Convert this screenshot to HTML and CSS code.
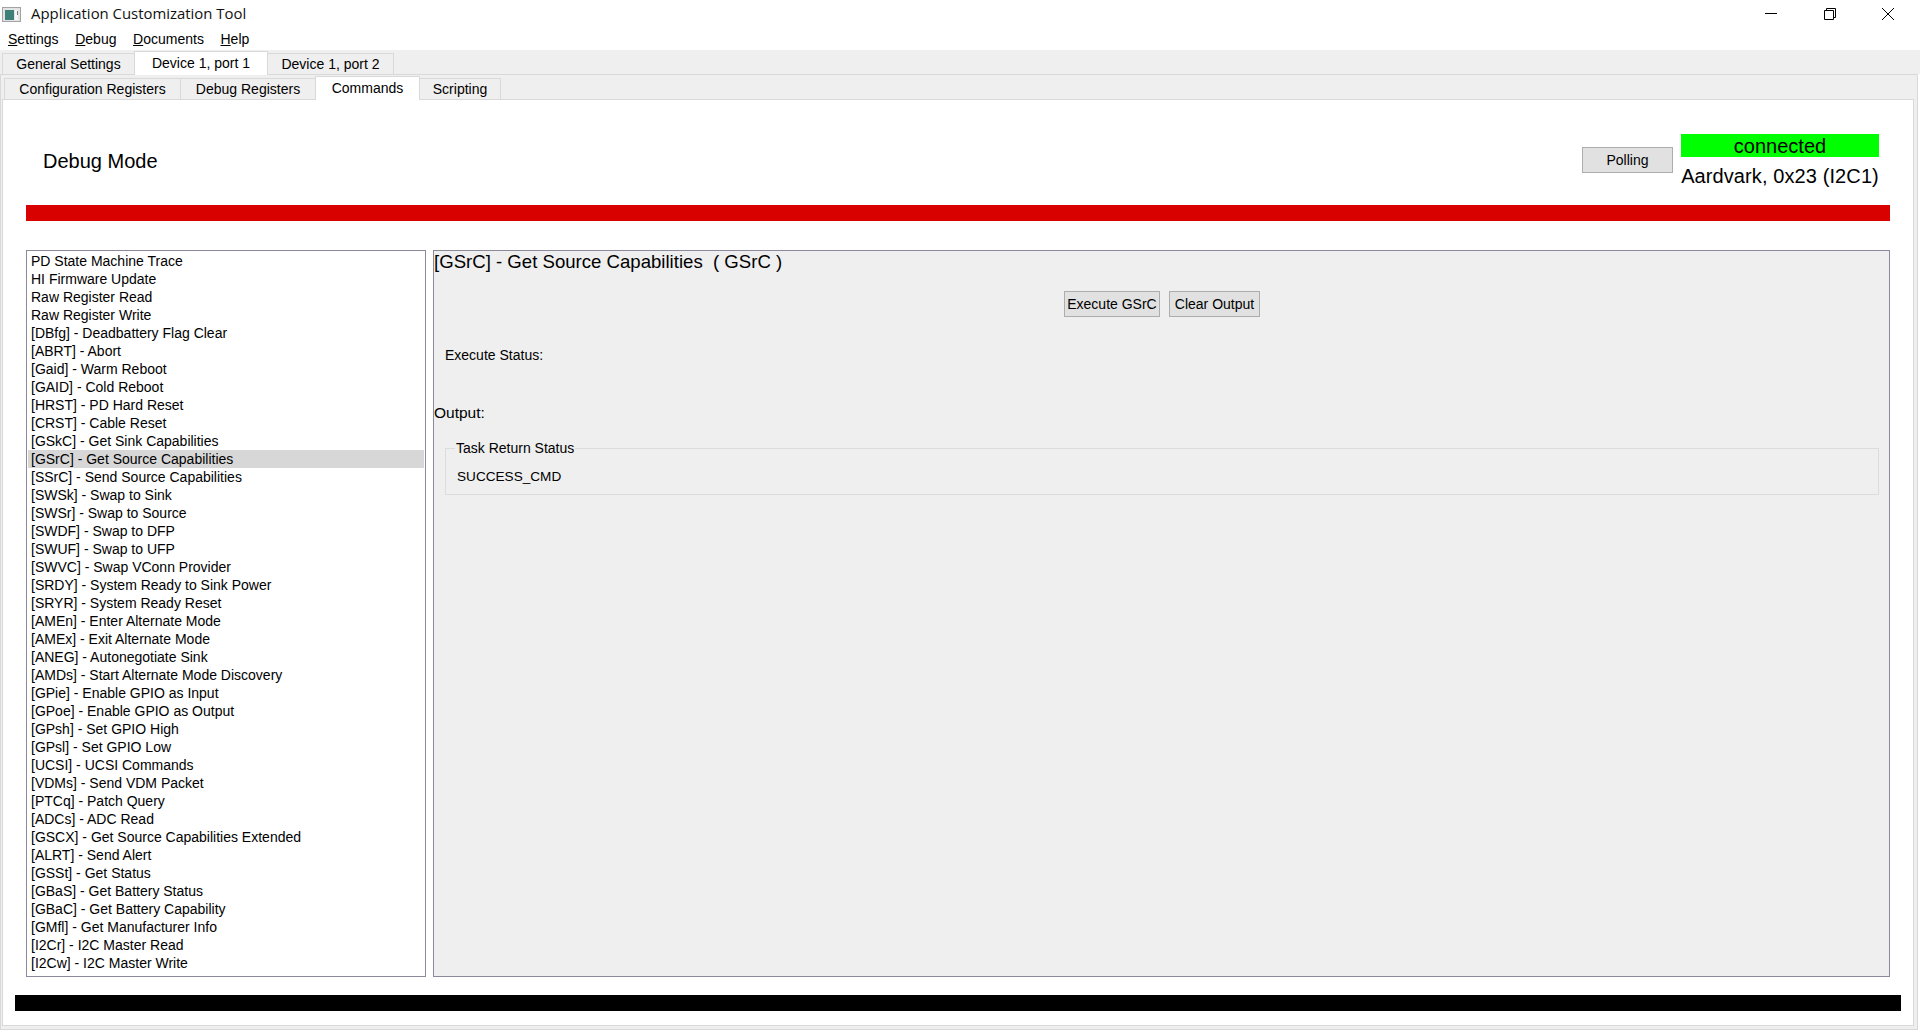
FILE: index.html
```html
<!DOCTYPE html>
<html lang="en">
<head>
<meta charset="utf-8">
<title>Application Customization Tool</title>
<link rel="stylesheet" href="styles.css">
</head>
<body>
<header class="titlebar">
  <svg class="app-icon" width="19" height="15" viewBox="0 0 19 15"><rect x="0.5" y="0.5" width="18" height="14" fill="#e4e4e4" stroke="#a3a3a3"/><rect x="3" y="3" width="9" height="10" fill="#3f7f7a"/><rect x="13" y="3" width="3" height="10" fill="#f6f6f6"/><rect x="15" y="4" width="1" height="4" fill="#777"/></svg>
  <span class="app-title">Application Customization Tool</span>
  <div class="window-controls">
    <svg width="14" height="14" viewBox="0 0 14 14"><path d="M1 6.5H13" stroke="#000" fill="none"/></svg>
    <svg width="14" height="14" viewBox="0 0 14 14"><path d="M1.5 3.5H10.5V12.5H1.5ZM3.5 3.5V1.5H12.5V10.5H10.5" stroke="#000" fill="none"/></svg>
    <svg width="14" height="14" viewBox="0 0 14 14"><path d="M1 1L13 13M13 1L1 13" stroke="#000" fill="none"/></svg>
  </div>
</header>
<nav class="menubar">
  <span><u>S</u>ettings</span>
  <span><u>D</u>ebug</span>
  <span><u>D</u>ocuments</span>
  <span><u>H</u>elp</span>
</nav>
<div class="tabstrip tabs-main">
  <span class="tab tab-general">General Settings</span>
  <span class="tab tab-port1 active">Device 1, port 1</span>
  <span class="tab tab-port2">Device 1, port 2</span>
</div>
<div class="outer-pane">
  <div class="tabstrip tabs-sub">
    <span class="tab tab-config">Configuration Registers</span>
    <span class="tab tab-debug">Debug Registers</span>
    <span class="tab tab-commands active">Commands</span>
    <span class="tab tab-scripting">Scripting</span>
  </div>
  <main class="inner-pane">
    <section class="head">
      <h1 class="mode">Debug Mode</h1>
      <button class="btn-polling">Polling</button>
      <div class="conn">
        <div class="conn-state">connected</div>
        <div class="conn-addr">Aardvark, 0x23 (I2C1)</div>
      </div>
    </section>
    <div class="bar-red"></div>
    <section class="work">
      <ul class="cmd-list">
        <li>PD State Machine Trace</li>
        <li>HI Firmware Update</li>
        <li>Raw Register Read</li>
        <li>Raw Register Write</li>
        <li>[DBfg] - Deadbattery Flag Clear</li>
        <li>[ABRT] - Abort</li>
        <li>[Gaid] - Warm Reboot</li>
        <li>[GAID] - Cold Reboot</li>
        <li>[HRST] - PD Hard Reset</li>
        <li>[CRST] - Cable Reset</li>
        <li>[GSkC] - Get Sink Capabilities</li>
        <li class="selected">[GSrC] - Get Source Capabilities</li>
        <li>[SSrC] - Send Source Capabilities</li>
        <li>[SWSk] - Swap to Sink</li>
        <li>[SWSr] - Swap to Source</li>
        <li>[SWDF] - Swap to DFP</li>
        <li>[SWUF] - Swap to UFP</li>
        <li>[SWVC] - Swap VConn Provider</li>
        <li>[SRDY] - System Ready to Sink Power</li>
        <li>[SRYR] - System Ready Reset</li>
        <li>[AMEn] - Enter Alternate Mode</li>
        <li>[AMEx] - Exit Alternate Mode</li>
        <li>[ANEG] - Autonegotiate Sink</li>
        <li>[AMDs] - Start Alternate Mode Discovery</li>
        <li>[GPie] - Enable GPIO as Input</li>
        <li>[GPoe] - Enable GPIO as Output</li>
        <li>[GPsh] - Set GPIO High</li>
        <li>[GPsl] - Set GPIO Low</li>
        <li>[UCSI] - UCSI Commands</li>
        <li>[VDMs] - Send VDM Packet</li>
        <li>[PTCq] - Patch Query</li>
        <li>[ADCs] - ADC Read</li>
        <li>[GSCX] - Get Source Capabilities Extended</li>
        <li>[ALRT] - Send Alert</li>
        <li>[GSSt] - Get Status</li>
        <li>[GBaS] - Get Battery Status</li>
        <li>[GBaC] - Get Battery Capability</li>
        <li>[GMfl] - Get Manufacturer Info</li>
        <li>[I2Cr] - I2C Master Read</li>
        <li>[I2Cw] - I2C Master Write</li>
      </ul>
      <div class="detail">
        <h2 class="detail-title">[GSrC] - Get Source Capabilities&nbsp; ( GSrC )</h2>
        <div class="actions">
          <button class="btn btn-exec">Execute GSrC</button>
          <button class="btn btn-clear">Clear Output</button>
        </div>
        <div class="exec-status">Execute Status:</div>
        <div class="output-label">Output:</div>
        <fieldset class="result">
          <legend>Task Return Status</legend>
          <div class="result-value">SUCCESS_CMD</div>
        </fieldset>
      </div>
    </section>
    <div class="bar-black"></div>
  </main>
</div>
</body>
</html>
```
FILE: styles.css
```css
* { box-sizing: border-box; }
html, body { margin: 0; padding: 0; }
body {
  width: 1920px;
  height: 1030px;
  overflow: hidden;
  background: #fff;
  color: #000;
  font-family: "Liberation Sans", Arial, sans-serif;
  font-size: 14px;
  display: flex;
  flex-direction: column;
}
.titlebar {
  height: 30px;
  flex: none;
  display: flex;
  align-items: center;
  padding-left: 2px;
}
.app-icon { flex: none; margin-top: -1px; }
.app-title {
  margin-left: 10px;
  margin-top: -4px;
  font-family: "Open Sans", sans-serif;
  font-size: 14.9px;
  color: #111;
}
.window-controls {
  margin-left: auto;
  margin-top: -2px;
  padding-right: 25px;
  display: flex;
  gap: 44.5px;
}
.window-controls svg { display: block; }
.menubar {
  height: 20px;
  flex: none;
  display: flex;
  gap: 16.6px;
  padding-left: 8px;
  padding-bottom: 2px;
  align-items: center;
  font-size: 14px;
}
.tabstrip {
  display: flex;
  align-items: flex-end;
  font-size: 14px;
  flex: none;
}
.tabs-main {
  height: 24px;
  background: #efefef;
  padding-left: 2px;
}
.tab {
  height: 21px;
  background: #efefef;
  border: 1px solid #d9d9d9;
  border-bottom: 0;
  border-right-width: 0;
  display: flex;
  align-items: center;
  justify-content: center;
}
.tab.active {
  background: #fff;
  height: 24px;
  padding-bottom: 2px;
  position: relative;
  top: 1px;
  border-right-width: 1px;
}
.tab-general { width: 132px; }
.tab-port1 { width: 134px; }
.tab-port2 { width: 126px; border-right-width: 1px; border-left-width: 0; }
.outer-pane {
  height: 956px;
  margin-right: 2px;
  border: 1px solid #d9d9d9;
  padding: 0 3px 3px 1px;
  background: #efefef;
  display: flex;
  flex-direction: column;
  flex: none;
}
.tabs-sub {
  height: 24px;
  padding-left: 3px;
  margin-left: -1px;
}
.tab-config { width: 176px; }
.tab-debug { width: 135px; }
.tab-commands { width: 105px; }
.tab-scripting { width: 81px; border-right-width: 1px; border-left-width: 0; }
.inner-pane {
  flex: 1;
  min-height: 0;
  background: #fff;
  border: 1px solid #d9d9d9;
  padding: 0 12px 0 12px;
  display: flex;
  flex-direction: column;
}
.head {
  height: 105px;
  flex: none;
  display: flex;
  padding-left: 28px;
  padding-right: 22px;
}
.mode {
  margin: 48px 0 0;
  font-size: 20px;
  font-weight: 400;
  line-height: 26px;
  flex: 1;
}
.btn-polling {
  width: 91px;
  height: 26px;
  margin-top: 47px;
  padding: 0;
  background: #e1e1e1;
  border: 1px solid #adadad;
  font: 14px "Liberation Sans", Arial, sans-serif;
  color: #000;
}
.conn { width: 198px; margin-left: 8px; padding-top: 34px; }
.conn-state {
  height: 23px;
  background: #00ff00;
  font-size: 20px;
  line-height: 25px;
  text-align: center;
}
.conn-addr {
  font-size: 20px;
  line-height: 24px;
  margin-top: 7px;
  white-space: nowrap;
  text-align: center;
  letter-spacing: 0.1px;
}
.bar-red {
  height: 16px;
  flex: none;
  margin-left: 11px;
  margin-right: 11px;
  background: #d90000;
}
.work {
  height: 727px;
  margin: 29px 11px 0;
  flex: none;
  display: flex;
  gap: 7px;
}
.cmd-list {
  width: 400px;
  height: 100%;
  flex: none;
  margin: 0;
  padding: 1px;
  list-style: none;
  border: 1px solid #8b8a9b;
  background: #fff;
  font-size: 14px;
}
.cmd-list li {
  height: 18px;
  line-height: 18px;
  padding-left: 3px;
  white-space: nowrap;
  color: #000;
}
.cmd-list li.selected { background: #d7d7d7; }
.detail {
  flex: 1;
  background: #efefef;
  border: 1px solid #8b8a9b;
  display: flex;
  flex-direction: column;
}
.detail-title {
  margin: 0;
  font-size: 18.6px;
  font-weight: 400;
  line-height: 22px;
  height: 40px;
}
.actions {
  display: flex;
  justify-content: center;
  gap: 9px;
  height: 26px;
  flex: none;
  padding-left: 1px;
}
.btn {
  height: 26px;
  padding: 0;
  background: #e1e1e1;
  border: 1px solid #adadad;
  font: 14px "Liberation Sans", Arial, sans-serif;
  color: #000;
}
.btn-exec { width: 96px; }
.btn-clear { width: 91px; }
.exec-status {
  margin: 28px 0 0 11px;
  line-height: 20px;
  font-size: 14px;
}
.output-label {
  margin: 38px 0 0;
  font-size: 15.5px;
  line-height: 20px;
}
.result {
  margin: 16px 10px 0 11px;
  padding: 0 9px;
  height: 56px;
  border: 1px solid #dcdcdc;
  min-width: 0;
}
.result legend {
  padding: 0 1px;
  margin-left: 0;
  font-size: 14px;
  line-height: 18px;
}
.result-value {
  font-size: 13.6px;
  line-height: 18px;
  margin-top: 11px;
  margin-left: 2px;
}
.bar-black {
  height: 16px;
  flex: none;
  margin: 18px 0 0;
  background: #000;
}
```
